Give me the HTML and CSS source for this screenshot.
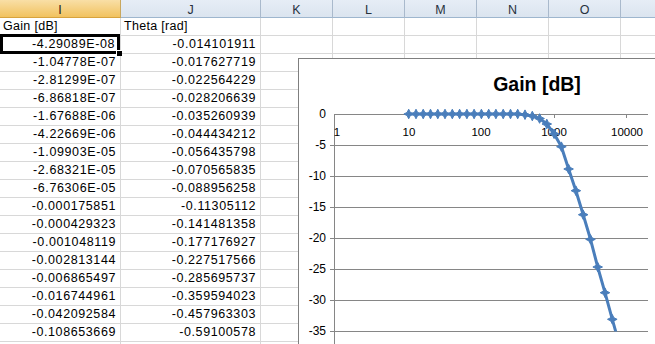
FILE: index.html
```html
<!DOCTYPE html>
<html>
<head>
<meta charset="utf-8">
<link rel="stylesheet" href="styles.css">
</head>
<body>
<div class="sheet">
  <div class="hdr sel">I</div><div class="hdr">J</div><div class="hdr">K</div><div class="hdr">L</div><div class="hdr">M</div><div class="hdr">N</div><div class="hdr">O</div><div class="hdr last">P</div>

  <div class="c txt">Gain [dB]</div><div class="c txt">Theta [rad]</div><div class="c"></div><div class="c"></div><div class="c"></div><div class="c"></div><div class="c"></div><div class="c"></div>
  <div class="c num active">-4.29089E-08</div><div class="c num">-0.014101911</div><div class="c"></div><div class="c"></div><div class="c"></div><div class="c"></div><div class="c"></div><div class="c"></div>
  <div class="c num">-1.04778E-07</div><div class="c num">-0.017627719</div><div class="c"></div><div class="c"></div><div class="c"></div><div class="c"></div><div class="c"></div><div class="c"></div>
  <div class="c num">-2.81299E-07</div><div class="c num">-0.022564229</div><div class="c"></div><div class="c"></div><div class="c"></div><div class="c"></div><div class="c"></div><div class="c"></div>
  <div class="c num">-6.86818E-07</div><div class="c num">-0.028206639</div><div class="c"></div><div class="c"></div><div class="c"></div><div class="c"></div><div class="c"></div><div class="c"></div>
  <div class="c num">-1.67688E-06</div><div class="c num">-0.035260939</div><div class="c"></div><div class="c"></div><div class="c"></div><div class="c"></div><div class="c"></div><div class="c"></div>
  <div class="c num">-4.22669E-06</div><div class="c num">-0.044434212</div><div class="c"></div><div class="c"></div><div class="c"></div><div class="c"></div><div class="c"></div><div class="c"></div>
  <div class="c num">-1.09903E-05</div><div class="c num">-0.056435798</div><div class="c"></div><div class="c"></div><div class="c"></div><div class="c"></div><div class="c"></div><div class="c"></div>
  <div class="c num">-2.68321E-05</div><div class="c num">-0.070565835</div><div class="c"></div><div class="c"></div><div class="c"></div><div class="c"></div><div class="c"></div><div class="c"></div>
  <div class="c num">-6.76306E-05</div><div class="c num">-0.088956258</div><div class="c"></div><div class="c"></div><div class="c"></div><div class="c"></div><div class="c"></div><div class="c"></div>
  <div class="c num">-0.000175851</div><div class="c num">-0.11305112</div><div class="c"></div><div class="c"></div><div class="c"></div><div class="c"></div><div class="c"></div><div class="c"></div>
  <div class="c num">-0.000429323</div><div class="c num">-0.141481358</div><div class="c"></div><div class="c"></div><div class="c"></div><div class="c"></div><div class="c"></div><div class="c"></div>
  <div class="c num">-0.001048119</div><div class="c num">-0.177176927</div><div class="c"></div><div class="c"></div><div class="c"></div><div class="c"></div><div class="c"></div><div class="c"></div>
  <div class="c num">-0.002813144</div><div class="c num">-0.227517566</div><div class="c"></div><div class="c"></div><div class="c"></div><div class="c"></div><div class="c"></div><div class="c"></div>
  <div class="c num">-0.006865497</div><div class="c num">-0.285695737</div><div class="c"></div><div class="c"></div><div class="c"></div><div class="c"></div><div class="c"></div><div class="c"></div>
  <div class="c num">-0.016744961</div><div class="c num">-0.359594023</div><div class="c"></div><div class="c"></div><div class="c"></div><div class="c"></div><div class="c"></div><div class="c"></div>
  <div class="c num">-0.042092584</div><div class="c num">-0.457963303</div><div class="c"></div><div class="c"></div><div class="c"></div><div class="c"></div><div class="c"></div><div class="c"></div>
  <div class="c num">-0.108653669</div><div class="c num">-0.59100578</div><div class="c"></div><div class="c"></div><div class="c"></div><div class="c"></div><div class="c"></div><div class="c"></div>
  <div class="c"></div><div class="c"></div><div class="c"></div><div class="c"></div><div class="c"></div><div class="c"></div><div class="c"></div><div class="c"></div>
</div>

<div class="chart">
  <svg width="360" height="290" viewBox="299 59 360 290">
    <defs>
      <clipPath id="plot"><rect x="334" y="100" width="320" height="231.5"/></clipPath>
      <path id="dm" d="M0 -4.8 L1.6 -1.6 L4.8 0 L1.6 1.6 L0 4.8 L-1.6 1.6 L-4.8 0 L-1.6 -1.6 Z"/>
    </defs>
    <text class="title" x="537" y="91" text-anchor="middle">Gain [dB]</text>
    <g class="grid">
      <line x1="334" y1="145.5" x2="648" y2="145.5"/>
      <line x1="334" y1="176.5" x2="648" y2="176.5"/>
      <line x1="334" y1="207.5" x2="648" y2="207.5"/>
      <line x1="334" y1="238.5" x2="648" y2="238.5"/>
      <line x1="334" y1="269.5" x2="648" y2="269.5"/>
      <line x1="334" y1="300.5" x2="648" y2="300.5"/>
      <line x1="334" y1="331.5" x2="648" y2="331.5"/>
      <line x1="334.5" y1="114" x2="334.5" y2="350"/>
      <line x1="334" y1="114.5" x2="648" y2="114.5"/>
      <line x1="408.5" y1="114" x2="408.5" y2="118"/>
      <line x1="481.5" y1="114" x2="481.5" y2="118"/>
      <line x1="554.5" y1="114" x2="554.5" y2="118"/>
      <line x1="626.5" y1="114" x2="626.5" y2="118"/>
      <line x1="330" y1="145.5" x2="334" y2="145.5"/>
      <line x1="330" y1="176.5" x2="334" y2="176.5"/>
      <line x1="330" y1="207.5" x2="334" y2="207.5"/>
      <line x1="330" y1="238.5" x2="334" y2="238.5"/>
      <line x1="330" y1="269.5" x2="334" y2="269.5"/>
      <line x1="330" y1="300.5" x2="334" y2="300.5"/>
      <line x1="330" y1="331.5" x2="334" y2="331.5"/>
    </g>
    <g class="ylab" text-anchor="end">
      <text x="326" y="118">0</text>
      <text x="326" y="149">-5</text>
      <text x="326" y="180">-10</text>
      <text x="326" y="211">-15</text>
      <text x="326" y="242">-20</text>
      <text x="326" y="273">-25</text>
      <text x="326" y="304">-30</text>
      <text x="326" y="335">-35</text>
    </g>
    <g class="xlab" text-anchor="middle">
      <text x="337" y="136">1</text>
      <text x="409" y="136">10</text>
      <text x="481" y="136">100</text>
      <text x="554" y="136">1000</text>
      <text x="627" y="136">10000</text>
    </g>
    <g clip-path="url(#plot)">
      <polyline class="series" points="408.7,114 416,114 423.2,114 430.5,114 437.8,114 445,114 452.3,114 459.6,114 466.9,114 474.1,114 481.4,114 488.7,114 495.9,114 503.2,114 510.5,114 517.7,114 525,114.7 532.3,116 539.6,118.5 546.8,124 554.1,133.8 561.4,146.7 568.6,169 575.9,190.7 583.2,214.7 590.5,239.3 597.7,267 605,292.7 612.3,319.3 619.5,345"/>
      <g class="mk">
        <use href="#dm" x="408.7" y="114"/><use href="#dm" x="416" y="114"/><use href="#dm" x="423.2" y="114"/><use href="#dm" x="430.5" y="114"/><use href="#dm" x="437.8" y="114"/><use href="#dm" x="445" y="114"/><use href="#dm" x="452.3" y="114"/><use href="#dm" x="459.6" y="114"/><use href="#dm" x="466.9" y="114"/><use href="#dm" x="474.1" y="114"/><use href="#dm" x="481.4" y="114"/><use href="#dm" x="488.7" y="114"/><use href="#dm" x="495.9" y="114"/><use href="#dm" x="503.2" y="114"/><use href="#dm" x="510.5" y="114"/><use href="#dm" x="517.7" y="114"/><use href="#dm" x="525" y="114.7"/><use href="#dm" x="532.3" y="116"/><use href="#dm" x="539.6" y="118.5"/><use href="#dm" x="546.8" y="124"/><use href="#dm" x="554.1" y="133.8"/><use href="#dm" x="561.4" y="146.7"/><use href="#dm" x="568.6" y="169"/><use href="#dm" x="575.9" y="190.7"/><use href="#dm" x="583.2" y="214.7"/><use href="#dm" x="590.5" y="239.3"/><use href="#dm" x="597.7" y="267"/><use href="#dm" x="605" y="292.7"/><use href="#dm" x="612.3" y="319.3"/>
      </g>
    </g>
  </svg>
</div>
</body>
</html>
```

FILE: styles.css
```css
html, body {
  margin: 0;
  padding: 0;
  background: #fff;
  overflow: hidden;
  width: 655px;
  height: 344px;
}

.sheet {
  display: grid;
  grid-template-columns: 121px 140px 72px 72px 72px 72px 72px 100px;
  grid-auto-rows: 18px;
  font-family: "Liberation Sans", Arial, sans-serif;
  font-size: 12.5px;
  color: #000;
}

.hdr {
  box-sizing: border-box;
  background: linear-gradient(#e6edf6, #dbe4ef);
  border-right: 1px solid #a9b9cc;
  border-bottom: 1px solid #9eb6ce;
  text-align: center;
  color: #27313d;
  line-height: 14px;
  padding-top: 3px;
  font-size: 12.5px;
}

.hdr.sel {
  background: linear-gradient(#f9dfa6, #f1c25f);
  border-bottom-color: #d7a33e;
  border-right-color: #c9a75e;
  color: #1c1c1c;
}

.c {
  box-sizing: border-box;
  border-right: 1px solid #d8d8d8;
  border-bottom: 1px solid #d8d8d8;
  line-height: 17px;
  white-space: nowrap;
  overflow: visible;
}

.txt {
  padding-left: 3px;
  letter-spacing: 0.3px;
}

.num {
  text-align: right;
  padding-right: 4px;
  letter-spacing: 0.6px;
}

.active {
  position: relative;
  padding-right: 5px;
}

.active::after {
  content: "";
  position: absolute;
  left: 0;
  top: -2px;
  right: 0;
  bottom: -1px;
  border: 3px solid #000;
  box-sizing: border-box;
}

.active::before {
  content: "";
  position: absolute;
  right: -2px;
  bottom: -3px;
  width: 5px;
  height: 5px;
  background: #000;
  border-left: 1px solid #fff;
  border-top: 1px solid #fff;
  z-index: 1;
}

.chart {
  position: absolute;
  left: 298px;
  top: 58px;
  width: 360px;
  height: 290px;
  background: #fff;
  border-left: 1px solid #7f7f7f;
  border-top: 1px solid #7f7f7f;
}

.chart svg {
  display: block;
}

.title {
  font-family: "Liberation Sans", Arial, sans-serif;
  font-weight: bold;
  font-size: 19.5px;
  fill: #000;
}

.grid line {
  stroke: #868686;
  stroke-width: 1;
  shape-rendering: crispEdges;
}

.ylab text, .xlab text {
  font-family: "Liberation Sans", Arial, sans-serif;
  font-size: 12px;
  fill: #000;
}

.xlab text {
  font-size: 11.5px;
}

.series {
  fill: none;
  stroke: #4a7ebb;
  stroke-width: 3;
  stroke-linejoin: round;
}

.mk use {
  fill: #4a7ebb;
  stroke: #4a7ebb;
  stroke-width: 1;
  stroke-linejoin: round;
}
```
